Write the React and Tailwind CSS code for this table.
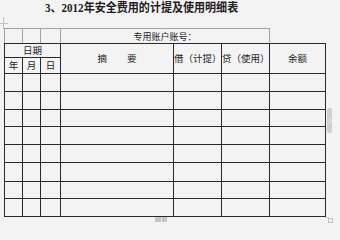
import React from 'react';

const rows = [17, 17, 16, 17, 17, 18, 16, 17];

export default function App() {
  return (
    <div className="relative w-[340px] h-[240px] overflow-hidden bg-[#f3f3f3] text-[#1e1e1e]" style={{ fontFamily: '"Noto Sans CJK SC", sans-serif' }}>
      <div className="h-[28px] pl-[45px] pt-[1px]">
        <div className="origin-left scale-x-[0.92] text-[12px] leading-[14px] font-semibold whitespace-nowrap" style={{ fontFamily: '"Liberation Serif", "Noto Sans CJK SC", serif' }}>
          3、2012年安全费用的计提及使用明细表
        </div>
      </div>

      {/* account row, lighter lines */}
      <div className="ml-[4px] w-fit grid grid-cols-[17px_17px_19px_208px] grid-rows-[14px] gap-px px-px pt-px bg-[#a2a2a2] text-[9px] leading-none">
        <div className="bg-[#f3f3f3]" />
        <div className="bg-[#f3f3f3]" />
        <div className="bg-[#f3f3f3]" />
        <div className="bg-[#f3f3f3] flex items-center justify-center">专用账户账号：</div>
      </div>

      {/* main table */}
      <div className="ml-[4px] w-fit grid grid-cols-[17px_17px_19px_112px_47px_47px_55px] grid-rows-[13px_15px] gap-px p-px bg-[#2a2a2a] text-[9.5px] leading-none">
        <div className="col-span-3 bg-[#f3f3f3] flex items-center justify-center">日期</div>
        <div className="row-span-2 bg-[#f3f3f3] flex items-center justify-center gap-[20px]">
          <span>摘</span>
          <span>要</span>
        </div>
        <div className="row-span-2 bg-[#f3f3f3] flex items-center justify-center">借（计提）</div>
        <div className="row-span-2 bg-[#f3f3f3] flex items-center justify-center">贷（使用）</div>
        <div className="row-span-2 bg-[#f3f3f3] flex items-center justify-center">余额</div>
        <div className="bg-[#f3f3f3] flex items-center justify-center">年</div>
        <div className="bg-[#f3f3f3] flex items-center justify-center">月</div>
        <div className="bg-[#f3f3f3] flex items-center justify-center">日</div>
        {rows.map((h, i) => (
          <React.Fragment key={i}>
            {[0, 1, 2, 3, 4, 5, 6].map((c) => (
              <div key={c} className="bg-[#f3f3f3]" style={{ height: h }} />
            ))}
          </React.Fragment>
        ))}
      </div>

      {/* crop mark top-left */}
      <div className="absolute left-[3px] top-[17px] w-px h-[12px] bg-[#c4c4c4]" />
      <div className="absolute left-0 top-[23px] w-[8px] h-px bg-[#c4c4c4]" />

      {/* right side handle */}
      <div className="absolute left-[327px] top-[108px] w-[5px] h-[25px] rounded-[2px] bg-[#cfcfd3] flex items-center justify-center">
        <svg width="4" height="7" viewBox="0 0 4 7"><path d="M1 1l2 2.5L1 6" fill="none" stroke="#f3f3f3" strokeWidth="1" /></svg>
      </div>

      {/* bottom handle */}
      <div className="absolute left-[155px] top-[217px] w-[12px] h-[5px] rounded-[1px] bg-[#c4c4cb]" />
      <div className="absolute left-[161px] top-[217px] w-px h-[5px] bg-[#e6e6e6]" />

      {/* corner mark bottom-right */}
      <div className="absolute left-[328px] top-[218px] w-[5px] h-[5px] border border-[#c0c0c0]" />
      <div className="absolute left-[325px] top-[217px] w-[4px] h-px bg-[#d0d0d0]" />
    </div>
  );
}
